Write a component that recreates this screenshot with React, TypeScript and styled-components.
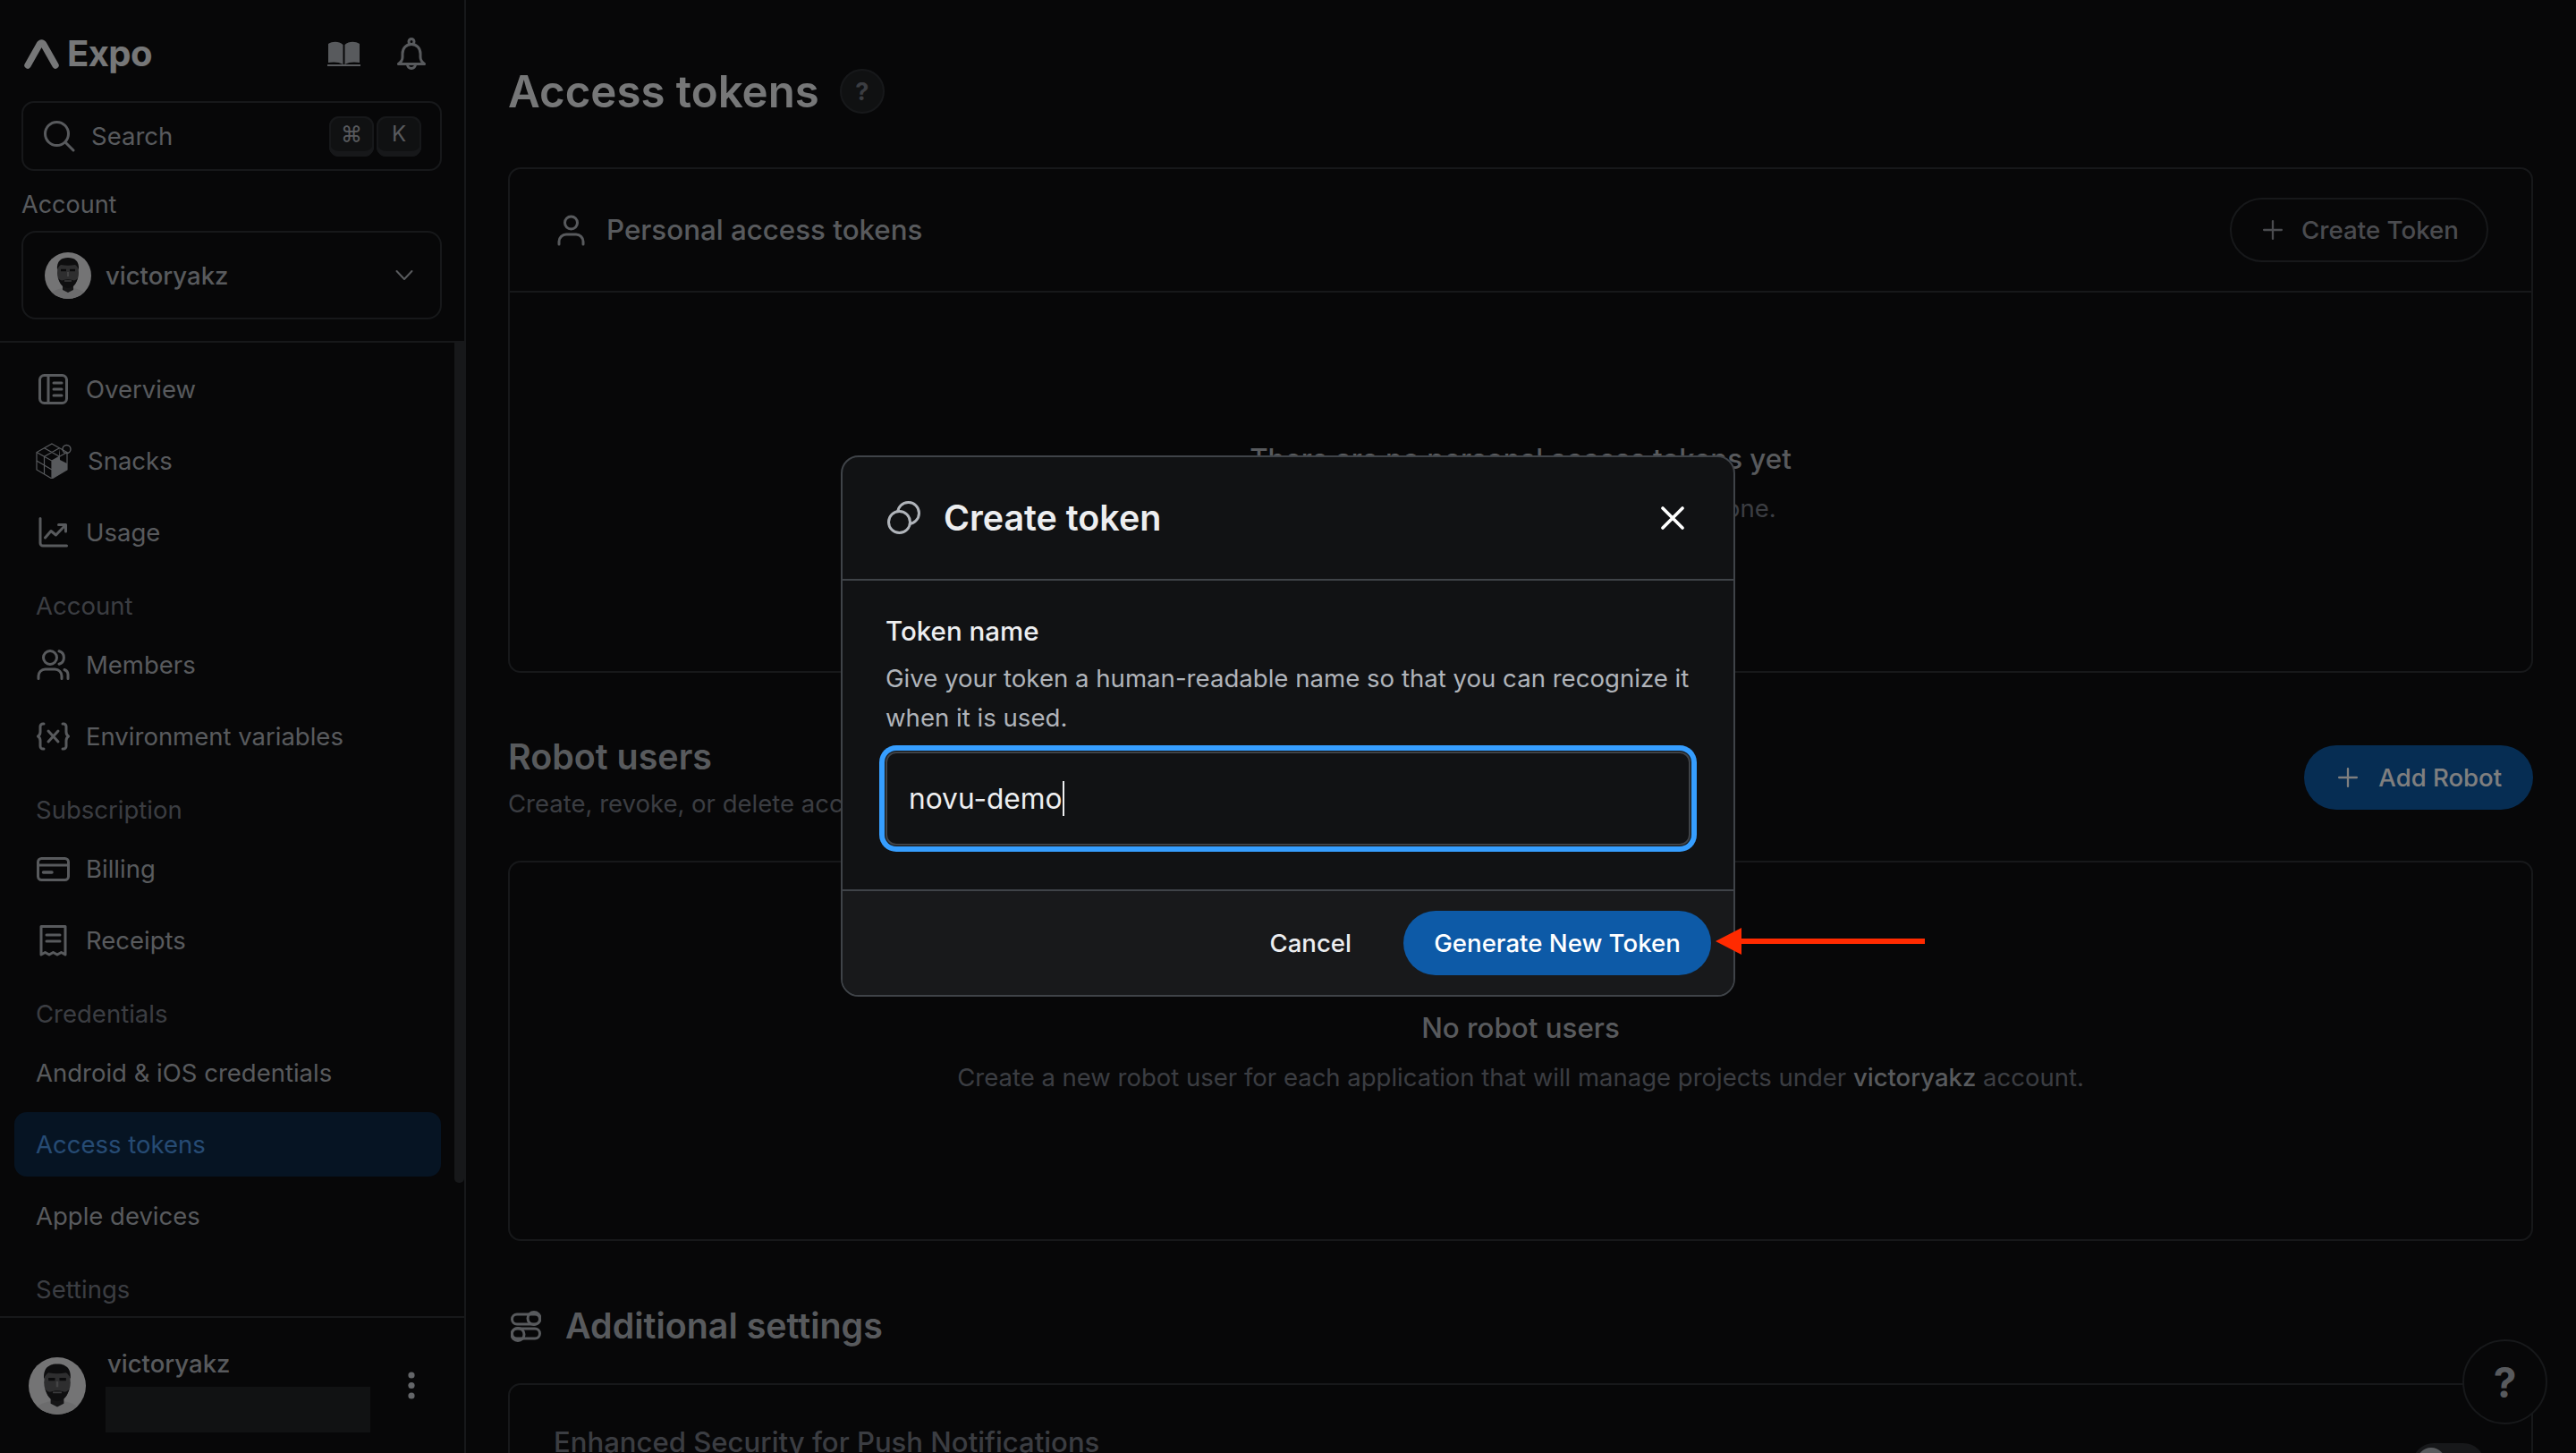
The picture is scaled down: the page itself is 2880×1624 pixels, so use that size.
import React from "react";
import styled, { createGlobalStyle } from "styled-components";
import { Plus } from "lucide-react";

const Global = createGlobalStyle`
  * { box-sizing: border-box; }
  html, body { margin: 0; padding: 0; background: #0e0e10; }
  body { font-family: "Inter", "Liberation Sans", sans-serif; color: #edeef0; }
`;

const Page = styled.div`
  position: relative;
  display: flex;
  width: 2880px;
  height: 1624px;
  overflow: hidden;
  background: #0e0e10;
`;

/* ---------- sidebar ---------- */
const Sidebar = styled.aside`
  position: relative;
  flex: 0 0 521px;
  display: flex;
  flex-direction: column;
  height: 100%;
  border-right: 2px solid #2e3135;
`;
const SideTop = styled.div`
  flex: 0 0 383px;
  padding: 0 25px 0 24px;
  border-bottom: 2px solid #2e3135;
`;
const SideHead = styled.div`
  height: 113px;
  padding: 6px 18px 0 3px;
  display: flex;
  align-items: center;
  justify-content: space-between;
`;
const Logo = styled.div`
  display: flex;
  align-items: center;
  gap: 9px;
`;
const LogoWord = styled.span`
  font-size: 40px;
  line-height: 44px;
  font-weight: 700;
  letter-spacing: -0.6px;
  color: #edeef0;
`;
const HeadIcons = styled.div`
  display: flex;
  align-items: center;
  gap: 41px;
`;
const SearchBox = styled.div`
  height: 78px;
  padding: 0 21px 0 23px;
  display: flex;
  align-items: center;
  gap: 18px;
  border: 2px solid #2e3135;
  border-radius: 14px;
`;
const SearchText = styled.span`
  flex: 1;
  font-size: 27.5px;
  color: #b0b4ba;
`;
const Keys = styled.div`
  display: flex;
  gap: 3px;
`;
const Key = styled.span`
  width: 50px;
  height: 45px;
  padding-bottom: 5px;
  display: flex;
  align-items: center;
  justify-content: center;
  font-family: "Inter", "DejaVu Sans", sans-serif;
  font-size: 24px;
  color: #b0b4ba;
  background: #212225;
  border-radius: 11px;
  box-shadow: inset 0 -6px 0 #2e3135, inset 0 0 0 2px #2e3135;
`;
const AccountLabel = styled.div`
  height: 67px;
  padding-top: 20px;
  font-size: 27px;
  line-height: 36px;
  color: #b0b4ba;
`;
const AccountSelect = styled.div`
  height: 99px;
  padding: 0 30px 0 24px;
  display: flex;
  align-items: center;
  gap: 16px;
  border: 2px solid #2e3135;
  border-radius: 16px;
`;
const AccountName = styled.span`
  flex: 1;
  font-size: 27.5px;
  font-weight: 500;
  color: #b0b4ba;
`;
const Nav = styled.nav`
  flex: 1;
  min-height: 0;
  overflow: hidden;
  padding: 16px 26px 0 16px;
`;
const SectionLabel = styled.div`
  height: 68px;
  padding: 20px 0 0 24px;
  font-size: 27.5px;
  line-height: 36px;
  color: #777b84;
`;
const NavItem = styled.div<{ $active?: boolean }>`
  height: 72px;
  margin-bottom: 8px;
  padding-left: 24px;
  display: flex;
  align-items: center;
  gap: 18px;
  font-size: 27.5px;
  border-radius: 14px;
  color: ${(p) => (p.$active ? "#4d96e6" : "#b0b4ba")};
  background: ${(p) => (p.$active ? "#0d2847" : "transparent")};
`;
const IconCell = styled.span`
  flex: 0 0 38px;
  display: flex;
  align-items: center;
  justify-content: center;
`;
const Scrollbar = styled.div`
  position: absolute;
  top: 383px;
  right: 0;
  width: 11px;
  height: 939px;
  background: #2e3135;
  border-radius: 0 0 5px 5px;
`;
const SideUser = styled.div`
  flex: 0 0 153px;
  padding: 0 0 0 32px;
  display: flex;
  align-items: center;
  gap: 24px;
  border-top: 2px solid #2e3135;
`;
const UserCol = styled.div`
  width: 296px;
  margin-top: 9px;
  display: flex;
  flex-direction: column;
  align-items: flex-start;
`;
const UserName = styled.div`
  font-size: 27.5px;
  font-weight: 500;
  line-height: 36px;
  margin: 0 0 8px 0;
  color: #b0b4ba;
`;
const Redacted = styled.div`
  width: 296px;
  height: 51px;
  margin-left: -2px;
  background: #222426;
`;
const DotsCell = styled.div`
  margin-left: 16px;
  display: flex;
`;

/* ---------- main ---------- */
const Main = styled.main`
  flex: 1;
  min-width: 0;
  padding: 78px 48px 0 47px;
`;
const TitleRow = styled.div`
  height: 48px;
  display: flex;
  align-items: center;
  gap: 23px;
`;
const Title = styled.h1`
  margin: 0;
  font-size: 49.2px;
  line-height: 60px;
  font-weight: 600;
  color: #edeef0;
`;
const HelpBadge = styled.span`
  width: 50px;
  height: 50px;
  flex: 0 0 50px;
  display: flex;
  align-items: center;
  justify-content: center;
  border-radius: 50%;
  background: #212225;
  border: 2px solid #2e3135;
  font-size: 27px;
  font-weight: 700;
  color: #777b84;
`;
const Card = styled.section<{ $height: number; $top: number }>`
  margin-top: ${(p) => p.$top}px;
  height: ${(p) => p.$height}px;
  border: 2px solid #2e3135;
  border-radius: 14px;
`;
const CardHead = styled.div`
  height: 138px;
  padding: 0 48px 0 53px;
  display: flex;
  align-items: center;
  justify-content: space-between;
  border-bottom: 2px solid #2e3135;
`;
const CardTitle = styled.div`
  display: flex;
  align-items: center;
  gap: 24px;
  font-size: 31.3px;
  font-weight: 500;
  color: #b0b4ba;
`;
const GhostButton = styled.div`
  height: 72px;
  padding: 0 31px 0 29px;
  display: flex;
  align-items: center;
  gap: 15px;
  border: 2px solid #2e3135;
  border-radius: 36px;
  font-size: 27.7px;
  font-weight: 500;
  color: #94979e;
`;
const Empty = styled.div<{ $top: number }>`
  padding-top: ${(p) => p.$top}px;
  display: flex;
  flex-direction: column;
  align-items: center;
`;
const EmptyTitle = styled.div`
  font-size: 31.3px;
  line-height: 44px;
  font-weight: 500;
  color: #b0b4ba;
`;
const EmptyText = styled.div`
  margin-top: 11px;
  font-size: 27.5px;
  line-height: 44px;
  color: #777b84;
`;
const Strong = styled.span`
  font-weight: 500;
  color: #b0b4ba;
`;
const SectionHead = styled.div`
  margin-top: 66px;
  height: 104px;
  display: flex;
  align-items: center;
  justify-content: space-between;
`;
const H2 = styled.h2`
  margin: 0;
  font-size: 39.4px;
  line-height: 56px;
  font-weight: 600;
  color: #b0b4ba;
`;
const SectionSub = styled.div`
  font-size: 27.5px;
  line-height: 48px;
  color: #777b84;
`;
const PrimaryButton = styled.div`
  height: 72px;
  margin-top: -2px;
  padding: 0 35px 0 32px;
  display: flex;
  align-items: center;
  gap: 17px;
  border-radius: 36px;
  background: #0d5aa7;
  font-size: 27.5px;
  font-weight: 500;
  color: #ffffff;
`;
const SettingsHead = styled.div`
  margin: 69px 0 38px 3px;
  height: 52px;
  display: flex;
  align-items: center;
  gap: 27px;
`;
const SettingsCard = styled.section`
  height: 200px;
  padding: 42px 52px 0 49px;
  display: flex;
  align-items: flex-start;
  justify-content: space-between;
  border: 2px solid #2e3135;
  border-radius: 14px;
`;
const SettingTitle = styled.div`
  font-size: 31.1px;
  line-height: 44px;
  font-weight: 500;
  color: #777b84;
`;
const Toggle = styled.div`
  width: 81px;
  height: 48px;
  margin-top: 23px;
  padding: 5px;
  border-radius: 24px;
  background: #2e3135;
`;
const Knob = styled.div`
  width: 32px;
  height: 32px;
  border-radius: 50%;
  background: #b0b4ba;
`;
const HelpFab = styled.div`
  position: absolute;
  left: 2753px;
  top: 1497px;
  width: 95px;
  height: 95px;
  display: flex;
  align-items: center;
  justify-content: center;
  border-radius: 50%;
  background: #0e0e10;
  border: 2px solid #2e3135;
  font-size: 46px;
  font-weight: 700;
  color: #b0b4ba;
`;

/* ---------- dialog ---------- */
const Scrim = styled.div`
  position: absolute;
  inset: 0;
  display: flex;
  align-items: center;
  justify-content: center;
  padding-bottom: 2px;
  background: rgba(0, 0, 0, 0.5);
`;
const Dialog = styled.div`
  width: 1000px;
  height: 605px;
  display: flex;
  flex-direction: column;
  overflow: hidden;
  background: #111214;
  border: 2px solid #3f4348;
  border-radius: 20px;
`;
const DialogHead = styled.div`
  flex: 0 0 138px;
  padding: 0 55px 0 50px;
  display: flex;
  align-items: center;
  gap: 26px;
  border-bottom: 2px solid #3f4348;
`;
const DialogTitle = styled.div`
  flex: 1;
  font-size: 39.4px;
  font-weight: 600;
  color: #edeef0;
`;
const DialogBody = styled.div`
  flex: 1;
  padding: 36px 48px 0 48px;
`;
const FieldLabel = styled.div`
  font-size: 29.5px;
  line-height: 40px;
  font-weight: 500;
  color: #edeef0;
`;
const FieldHint = styled.div`
  margin-top: 11px;
  margin-right: -8px;
  font-size: 27.6px;
  line-height: 44px;
  color: #b0b4ba;
`;
const Field = styled.div`
  height: 105px;
  margin-top: 16px;
  padding: 0 24px;
  display: flex;
  align-items: center;
  border: 2px solid #3f4348;
  border-radius: 12px;
  background: #111214;
  box-shadow: 0 0 0 1px #111214, 0 0 0 7px #369eff;
  font-size: 31.7px;
  color: #edeef0;
`;
const Caret = styled.span`
  width: 2px;
  height: 39px;
  background: #edeef0;
`;
const DialogFoot = styled.div`
  flex: 0 0 118px;
  padding: 0 25px 0 0;
  display: flex;
  align-items: center;
  justify-content: flex-end;
  gap: 58px;
  background: #18191b;
  border-top: 2px solid #3f4348;
`;
const CancelText = styled.div`
  font-size: 27.6px;
  font-weight: 500;
  color: #edeef0;
`;
const GenerateButton = styled.div`
  width: 344px;
  height: 72px;
  display: flex;
  align-items: center;
  justify-content: center;
  border-radius: 36px;
  background: #0d5aa7;
  font-size: 27.6px;
  font-weight: 500;
  color: #ffffff;
`;
const Callout = styled.svg`
  position: absolute;
  left: 1918px;
  top: 1037px;
`;

/* ---------- drawings ---------- */
const S = { fill: "none", stroke: "#b0b4ba", strokeWidth: 3, strokeLinecap: "round", strokeLinejoin: "round" } as const;

const ExpoMark = () => (
  <svg width="39" height="36" viewBox="0 0 39 36">
    <path d="M4 31 L17 8 Q19.500 4 22 8 L35 31" fill="none" stroke="#edeef0" strokeWidth="7.500" strokeLinecap="round" strokeLinejoin="round" />
  </svg>
);
const Book = () => (
  <svg width="37" height="28" viewBox="0 0 37 28">
    <path d="M1 3C6 0 13 0 17.500 4V26C13 23 6 23 1 24Z" fill="#b0b4ba" />
    <path d="M36 3C31 0 24 0 19.500 4V26C24 23 31 23 36 24Z" fill="#b0b4ba" />
    <path d="M0 27H37" stroke="#b0b4ba" strokeWidth="2" />
  </svg>
);
const Bell = () => (
  <svg width="32" height="36" viewBox="0 0 32 36" {...S}>
    <circle cx="16" cy="4.500" r="3" />
    <path d="M16 7.500c-6 0-10 4.500-10 10.500v4c0 2.400-2 5.600-4.500 7.500h29c-2.500-1.900-4.500-5.100-4.500-7.500v-4c0-6-4-10.500-10-10.500z" />
    <path d="M11.500 30a4.500 4.500 0 0 0 9 0" />
  </svg>
);
const SearchGlyph = () => (
  <svg width="35" height="35" viewBox="0 0 35 35" {...S}>
    <circle cx="14.500" cy="14.500" r="13" />
    <path d="M24 24 L33 33" />
  </svg>
);
const Chevron = () => (
  <svg width="20" height="13" viewBox="0 0 20 13" {...S} strokeWidth={2}>
    <path d="M1.500 2 L10 11 L18.500 2" />
  </svg>
);
const OverviewIcon = () => (
  <svg width="33" height="34" viewBox="0 0 33 34" {...S}>
    <rect x="1.500" y="1.500" width="30" height="31" rx="5" />
    <path d="M11 1.500V32.500M17 10H26M17 17H26M17 24H26" />
  </svg>
);
const SnacksIcon = () => (
  <svg width="40" height="40" viewBox="0 0 40 40">
    <g fill="none" stroke="#b0b4ba" strokeWidth="1.200">
      <path d="M18 1 L35 10.500 V30 L18 40 L1 30 V10.500 Z" />
      <path d="M1 10.500 L18 20 V40 M18 20 L35 10.500 M9.500 5.700 L26.500 15.300 M26.500 5.700 L9.500 15.300 M1 20 L18 30 M9.500 15.300 V35" />
    </g>
    <path d="M18 20 L26 15.500 V11 L26.500 6 L27 19 L35 23 V30 L18 40 Z" fill="#b0b4ba" />
    <circle cx="34.500" cy="7" r="4.500" fill="none" stroke="#b0b4ba" strokeWidth="1.400" />
  </svg>
);
const UsageIcon = () => (
  <svg width="33" height="34" viewBox="0 0 33 34" {...S}>
    <path d="M2 1.500V29a3 3 0 0 0 3 3H31.500" />
    <path d="M7.500 23 L14 15.500 L19.500 20 L30 9" />
    <path d="M22.500 8.500H30.500V16" />
  </svg>
);
const MembersIcon = () => (
  <svg width="37" height="34" viewBox="0 0 37 34" {...S}>
    <circle cx="15" cy="9" r="7.500" />
    <path d="M25 1.800a7.500 7.500 0 0 1 0 14.400" />
    <path d="M2 32.500v-3a7.500 7.500 0 0 1 7.500-7.500h11a7.500 7.500 0 0 1 7.500 7.500v3" />
    <path d="M31 22.500a6 6 0 0 1 4 5.500v4.500" />
  </svg>
);
const EnvIcon = () => (
  <svg width="37" height="32" viewBox="0 0 37 32" {...S}>
    <path d="M8 2H7a3 3 0 0 0-3 3v6c0 3-1 4-2.500 5C3 17 4 18 4 21v6a3 3 0 0 0 3 3h1" />
    <path d="M29 2h1a3 3 0 0 1 3 3v6c0 3 1 4 2.500 5-1.500 1-2.500 2-2.500 5v6a3 3 0 0 1-3 3h-1" />
    <path d="M13 10 L24 22M24 10 L13 22" />
  </svg>
);
const BillingIcon = () => (
  <svg width="37" height="27" viewBox="0 0 37 27" {...S}>
    <rect x="1.500" y="1.500" width="34" height="24" rx="4" />
    <path d="M1.500 9H35.500" />
    <path d="M7.500 17H17" strokeWidth="3.500" />
  </svg>
);
const ReceiptIcon = () => (
  <svg width="31" height="35" viewBox="0 0 31 35" {...S}>
    <path d="M2 1.500H29V33l-4.500-2.500L20 33l-4.500-2.500L11 33l-4.500-2.500L2 33Z" />
    <path d="M8 11H23M8 18H23" />
  </svg>
);
const PersonIcon = () => (
  <svg width="31" height="35" viewBox="0 0 31 35" {...S}>
    <circle cx="15.500" cy="9" r="7" />
    <path d="M2 33v-3a8 8 0 0 1 8-8h11a8 8 0 0 1 8 8v3" />
  </svg>
);
const SettingsIcon = () => (
  <svg width="34" height="35" viewBox="0 0 34 35" fill="none" stroke="#b0b4ba" strokeWidth="3">
    <rect x="1.500" y="4" width="31" height="11" rx="5.500" />
    <circle cx="26" cy="8.500" r="7" />
    <rect x="1.500" y="20" width="31" height="11" rx="5.500" />
    <circle cx="8" cy="26.500" r="7" />
  </svg>
);
const TokenIcon = () => (
  <svg width="37" height="37" viewBox="0 0 37 37" fill="none" stroke="#b0b4ba" strokeWidth="3">
    <circle cx="23.500" cy="13.500" r="12" />
    <circle cx="13.500" cy="23.500" r="12" fill="#111214" />
  </svg>
);
const CloseIcon = () => (
  <svg width="26" height="26" viewBox="0 0 26 26" fill="none" stroke="#ffffff" strokeWidth="3.600" strokeLinecap="round">
    <path d="M2 2 L24 24M24 2 L2 24" />
  </svg>
);
const DotsIcon = () => (
  <svg width="8" height="31" viewBox="0 0 8 31" fill="#c8ccd2">
    <circle cx="4" cy="4" r="3.600" />
    <circle cx="4" cy="15.500" r="3.600" />
    <circle cx="4" cy="27" r="3.600" />
  </svg>
);
const Avatar = ({ size }: { size: number }) => (
  <svg width={size} height={size} viewBox="0 0 52 52">
    <defs>
      <clipPath id={`av${size}`}>
        <circle cx="26" cy="26" r="26" />
      </clipPath>
    </defs>
    <g clipPath={`url(#av${size})`}>
      <rect width="52" height="52" fill="#e8e8ea" />
      <path d="M4 52c1-8 9-11 16-12h12c7 1 15 4 16 12Z" fill="#d8d9db" />
      <path d="M20 34h12v8l-6 3-6-3Z" fill="#2a2a2c" />
      <ellipse cx="26" cy="23" rx="12" ry="16" fill="#5c5c5f" />
      <path d="M14 20C13 9 19 6 26 6s13 3 12 14c-1-3-2-5-4-6-5 1-11 1-16 0-2 1-3 3-4 6Z" fill="#1a1a1c" />
      <path d="M15 29c2 5 3 10 11 11 8-1 9-6 11-11-2 2-4 3-6 2-3-1-7-1-10 0-2 1-4 0-6-2Z" fill="#1f1f21" />
      <path d="M18 20h6M28 20h6" stroke="#161618" strokeWidth="2.500" />
      <path d="M26 22v5" stroke="#88888a" strokeWidth="2" />
      <path d="M22 32h8" stroke="#77777a" strokeWidth="1.500" />
    </g>
  </svg>
);

const TopNav = [
  { label: "Overview", icon: <OverviewIcon /> },
  { label: "Snacks", icon: <SnacksIcon /> },
  { label: "Usage", icon: <UsageIcon /> },
];

export default function App() {
  return (
    <Page>
      <Global />
      <Sidebar>
        <SideTop>
          <SideHead>
            <Logo>
              <ExpoMark />
              <LogoWord>Expo</LogoWord>
            </Logo>
            <HeadIcons>
              <Book />
              <Bell />
            </HeadIcons>
          </SideHead>
          <SearchBox>
            <SearchGlyph />
            <SearchText>Search</SearchText>
            <Keys>
              <Key>⌘</Key>
              <Key>K</Key>
            </Keys>
          </SearchBox>
          <AccountLabel>Account</AccountLabel>
          <AccountSelect>
            <Avatar size={52} />
            <AccountName>victoryakz</AccountName>
            <Chevron />
          </AccountSelect>
        </SideTop>
        <Nav>
          {TopNav.map((n) => (
            <NavItem key={n.label}>
              <IconCell>{n.icon}</IconCell>
              {n.label}
            </NavItem>
          ))}
          <SectionLabel>Account</SectionLabel>
          <NavItem>
            <IconCell><MembersIcon /></IconCell>
            Members
          </NavItem>
          <NavItem>
            <IconCell><EnvIcon /></IconCell>
            Environment variables
          </NavItem>
          <SectionLabel>Subscription</SectionLabel>
          <NavItem>
            <IconCell><BillingIcon /></IconCell>
            Billing
          </NavItem>
          <NavItem>
            <IconCell><ReceiptIcon /></IconCell>
            Receipts
          </NavItem>
          <SectionLabel>Credentials</SectionLabel>
          <NavItem>Android &amp; iOS credentials</NavItem>
          <NavItem $active>Access tokens</NavItem>
          <NavItem>Apple devices</NavItem>
          <SectionLabel>Settings</SectionLabel>
        </Nav>
        <Scrollbar />
        <SideUser>
          <Avatar size={64} />
          <UserCol>
            <UserName>victoryakz</UserName>
            <Redacted />
          </UserCol>
          <DotsCell>
            <DotsIcon />
          </DotsCell>
        </SideUser>
      </Sidebar>

      <Main>
        <TitleRow>
          <Title>Access tokens</Title>
          <HelpBadge>?</HelpBadge>
        </TitleRow>

        <Card $top={61} $height={565}>
          <CardHead>
            <CardTitle>
              <PersonIcon />
              Personal access tokens
            </CardTitle>
            <GhostButton>
              <Plus size={34} strokeWidth={1.6} color="#94979e" />
              Create Token
            </GhostButton>
          </CardHead>
          <Empty $top={164}>
            <EmptyTitle>There are no personal access tokens yet</EmptyTitle>
            <EmptyText>Press the button above to create a new one.</EmptyText>
          </Empty>
        </Card>

        <SectionHead>
          <div>
            <H2>Robot users</H2>
            <SectionSub>Create, revoke, or delete access tokens for robot users.</SectionSub>
          </div>
          <PrimaryButton>
            <Plus size={34} strokeWidth={1.6} color="#ffffff" />
            Add Robot
          </PrimaryButton>
        </SectionHead>

        <Card $top={40} $height={425}>
          <Empty $top={163}>
            <EmptyTitle>No robot users</EmptyTitle>
            <EmptyText>
              Create a new robot user for each application that will manage projects under <Strong>victoryakz</Strong> account.
            </EmptyText>
          </Empty>
        </Card>

        <SettingsHead>
          <SettingsIcon />
          <H2>Additional settings</H2>
        </SettingsHead>
        <SettingsCard>
          <SettingTitle>Enhanced Security for Push Notifications</SettingTitle>
          <Toggle>
            <Knob />
          </Toggle>
        </SettingsCard>
      </Main>

      <HelpFab>?</HelpFab>

      <Scrim>
        <Dialog>
          <DialogHead>
            <TokenIcon />
            <DialogTitle>Create token</DialogTitle>
            <CloseIcon />
          </DialogHead>
          <DialogBody>
            <FieldLabel>Token name</FieldLabel>
            <FieldHint>
              Give your token a human-readable name so that you can recognize it when it is used.
            </FieldHint>
            <Field>
              novu-demo
              <Caret />
            </Field>
          </DialogBody>
          <DialogFoot>
            <CancelText>Cancel</CancelText>
            <GenerateButton>Generate New Token</GenerateButton>
          </DialogFoot>
        </Dialog>
      </Scrim>

      <Callout width="234" height="30" viewBox="0 0 234 30">
        <path d="M0 15 L29 0 V12 H234 V18 H29 V30 Z" fill="#ff2a00" />
      </Callout>
    </Page>
  );
}
